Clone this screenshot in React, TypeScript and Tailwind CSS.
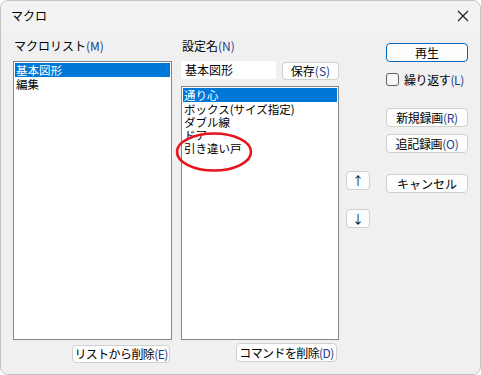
import React from "react"

const font = { fontFamily: '"Noto Sans CJK JP", "Noto Sans", sans-serif' }

const Acc = ({ k }: { k: string }) => <span className="text-[#1f3d8c]">({k})</span>

const Btn = ({ children, className = "" }: { children: React.ReactNode; className?: string }) => (
  <div
    className={`flex items-center justify-center whitespace-nowrap rounded-[4px] border border-[#d0d0d0] bg-[#fdfdfd] text-[12px] leading-none text-black ${className}`}
  >
    {children}
  </div>
)

const ListBox = ({ items, className = "" }: { items: string[]; className?: string }) => (
  <div className={`border border-[#82878f] bg-white p-[1px] ${className}`}>
    {items.map((it, i) => (
      <div
        key={it}
        className={`flex items-center h-[13px] pl-[1px] text-[11.5px] leading-[12px] whitespace-nowrap ${
          i === 0 ? "bg-[#0078d7] text-white h-[14px]" : "text-black"
        }`}
      >
        {it}
      </div>
    ))}
  </div>
)

export default function App() {
  return (
    <div className="w-[481px] h-[375px] bg-white" style={font}>
      <div className="w-[481px] h-[375px] rounded-[8px] border border-[#c4c4c4] bg-[#f0f0f0] overflow-hidden flex flex-col">
        {/* title bar */}
        <div className="h-[30px] bg-[#f3f3f3] flex items-center justify-between pl-[10px] pr-[11px]">
          <span className="text-[12px] text-black">マクロ</span>
          <svg width="12" height="12" viewBox="0 0 12 12">
            <path d="M1 1 L11 11 M11 1 L1 11" stroke="#1a1a1a" strokeWidth="1.1" />
          </svg>
        </div>

        <div className="flex flex-1 pl-[12px]">
          {/* macro list */}
          <div className="w-[159px] flex flex-col pt-[8px]">
            <div className="h-[22px] text-[12px] leading-[14px] pl-[1px]">
              マクロリスト<Acc k="M" />
            </div>
            <ListBox items={["基本図形", "編集"]} className="h-[279px]" />
            <div className="flex justify-end mt-[5px] pr-[2px]">
              <Btn className="w-[98px] h-[18px] tracking-[-0.6px]">
                リストから削除<Acc k="E" />
              </Btn>
            </div>
          </div>

          {/* settings */}
          <div className="w-[158px] ml-[9px] flex flex-col pt-[8px] relative">
            <div className="h-[22px] text-[12px] leading-[14px] pl-[1px]">
              設定名<Acc k="N" />
            </div>
            <div className="flex items-center h-[18px]">
              <div className="w-[95px] h-[18px] bg-white text-[12px] leading-[18px] pl-[4px]">基本図形</div>
              <Btn className="ml-[6px] w-[57px] h-[18px] mt-[1px]">
                保存<Acc k="S" />
              </Btn>
            </div>
            <ListBox
              items={["通り心", "ボックス(サイズ指定)", "ダブル線", "ドア", "引き違い戸"]}
              className="h-[254px] mt-[7px]"
            />
            <div className="flex justify-end mt-[3px] pr-[2px]">
              <Btn className="w-[101px] h-[19px] tracking-[-0.6px]">
                コマンドを削除<Acc k="D" />
              </Btn>
            </div>
            <svg
              className="absolute left-[-7px] top-[99px]"
              width="82"
              height="44"
              viewBox="0 0 82 44"
            >
              <ellipse cx="40" cy="22" rx="37" ry="18.5" fill="none" stroke="#e8141c" strokeWidth="2.6" />
            </svg>
          </div>

          {/* arrows */}
          <div className="w-[24px] ml-[7px] flex flex-col pt-[140px]">
            <Btn className="w-[24px] h-[19px] text-[#8a2020]">↑</Btn>
            <Btn className="w-[24px] h-[19px] mt-[19px] text-[#1f3d8c]">↓</Btn>
          </div>

          {/* right buttons */}
          <div className="w-[82px] ml-[16px] flex flex-col pt-[12px]">
            <div className="w-[82px] h-[19px] rounded-[4px] border border-[#0067c0] bg-[#fdfdfd] flex items-center justify-center text-[12px] leading-none">
              再生
            </div>
            <div className="flex items-center mt-[11px] h-[13px] whitespace-nowrap">
              <div className="w-[13px] h-[13px] shrink-0 rounded-[3px] border border-[#5f5f5f] bg-[#f7f7f7]" />
              <span className="ml-[5px] text-[12px] leading-none tracking-[-0.4px]">
                繰り返す<Acc k="L" />
              </span>
            </div>
            <Btn className="w-[82px] h-[19px] mt-[22px] tracking-[-0.3px]">
              新規録画<Acc k="R" />
            </Btn>
            <Btn className="w-[82px] h-[19px] mt-[7px] tracking-[-0.3px]">
              追記録画<Acc k="O" />
            </Btn>
            <Btn className="w-[82px] h-[19px] mt-[21px]">キャンセル</Btn>
          </div>
        </div>
      </div>
    </div>
  )
}
